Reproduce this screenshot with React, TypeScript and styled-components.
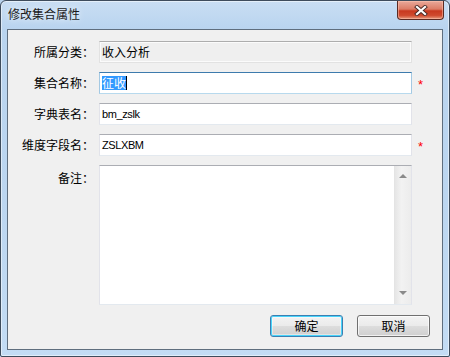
import React from 'react';
import styled, { createGlobalStyle } from 'styled-components';

const GlobalStyle = createGlobalStyle`
  html, body {
    margin: 0;
    padding: 0;
    background: #b8d2ec;
  }
  body {
    font-family: 'Noto Sans CJK SC', sans-serif;
    font-size: 12px;
    color: #000;
  }
`;

const fields = [
  { label: '所属分类：', value: '收入分析', kind: 'disabled' as const },
  { label: '集合名称：', value: '征收', kind: 'focused' as const, required: true },
  { label: '字典表名：', value: 'bm_zslk', kind: 'normal' as const },
  { label: '维度字段名：', value: 'ZSLXBM', kind: 'normal' as const, required: true },
];

const App = () => {
  return (
    <>
      <GlobalStyle />
      <Window>
        <TitleBar>
          <Title>修改集合属性</Title>
          <CloseButton>
            <svg width="14" height="11" viewBox="0 0 14 11">
              <path
                d="M3 2 L11 9 M11 2 L3 9"
                stroke="#4a2a26"
                strokeWidth="4"
                strokeLinecap="square"
              />
              <path
                d="M3 2 L11 9 M11 2 L3 9"
                stroke="#fff"
                strokeWidth="2.2"
                strokeLinecap="square"
              />
            </svg>
          </CloseButton>
        </TitleBar>
        <Client>
          <Form>
            {fields.map((f) => (
              <React.Fragment key={f.label}>
                <Label>{f.label}</Label>
                <TextBox $kind={f.kind}>
                  {f.kind === 'focused' ? (
                    <>
                      <Selected>{f.value}</Selected>
                      <Caret />
                    </>
                  ) : (
                    <Value $latin={/^[\x00-\x7f]+$/.test(f.value)}>{f.value}</Value>
                  )}
                </TextBox>
                <Mark>{f.required ? '*' : ''}</Mark>
              </React.Fragment>
            ))}
            <Label $top>备注：</Label>
            <Memo>
              <MemoBody />
              <ScrollBar>
                <Arrow $up />
                <Arrow />
              </ScrollBar>
            </Memo>
            <Mark />
          </Form>
          <Buttons>
            <Button $default>确定</Button>
            <Button>取消</Button>
          </Buttons>
        </Client>
      </Window>
    </>
  );
};

export default App;

const Window = styled.div`
  width: 450px;
  height: 357px;
  box-sizing: border-box;
  border: 1px solid #3e4c5c;
  border-radius: 6px 6px 2px 2px;
  padding: 0 6px 6px 6px;
  display: flex;
  flex-direction: column;
  background: linear-gradient(
    to bottom,
    #c9def3 0px,
    #b9d4ef 28px,
    #bcd6f0 200px,
    #c3dcf4 100%
  );
  box-shadow: inset 0 0 0 1px rgba(255, 255, 255, 0.5);
`;

const TitleBar = styled.div`
  height: 28px;
  display: flex;
  justify-content: space-between;
  align-items: flex-start;
`;

const Title = styled.div`
  padding: 5px 0 0 1px;
  font-size: 12px;
  line-height: 16px;
  color: #1b1b1b;
  text-shadow: 0 0 6px rgba(255, 255, 255, 0.9);
`;

const CloseButton = styled.div`
  width: 47px;
  height: 19px;
  margin-right: -1px;
  box-sizing: border-box;
  border: 1px solid #5a2a22;
  border-top: none;
  border-radius: 0 0 4px 4px;
  background: linear-gradient(
    to bottom,
    #e9a99a 0%,
    #dc7c66 45%,
    #c8391f 55%,
    #cf4a2e 80%,
    #e79a7d 100%
  );
  box-shadow: inset 0 0 0 1px rgba(255, 200, 180, 0.5);
  display: flex;
  align-items: center;
  justify-content: center;
`;

const Client = styled.div`
  flex: 1;
  border: 1px solid #5f6e7e;
  background: #f0f0f0;
  padding: 11px 12px 11px 0;
  display: flex;
  flex-direction: column;
`;

const Form = styled.div`
  display: grid;
  grid-template-columns: 86px 313px 1fr;
  grid-template-rows: repeat(4, 22px) 140px;
  column-gap: 5px;
  row-gap: 9px;
`;

const Label = styled.div<{ $top?: boolean }>`
  text-align: right;
  align-self: ${(p) => (p.$top ? 'start' : 'center')};
  padding-top: ${(p) => (p.$top ? '5px' : '0')};
  font-size: 12px;
  line-height: 16px;
  white-space: nowrap;
  color: #000;
`;

const borders = {
  disabled: '#adadad #e2e2e2 #e2e2e2 #e2e2e2',
  normal: '#abadb3 #e2e3ea #e3e9ef #e2e3ea',
  focused: '#3d7bad #a4c9e3 #b7d9ed #a4c9e3',
};

const TextBox = styled.div<{ $kind: 'disabled' | 'normal' | 'focused' }>`
  box-sizing: border-box;
  height: 22px;
  border: 1px solid;
  border-color: ${(p) => borders[p.$kind]};
  background: ${(p) => (p.$kind === 'disabled' ? '#efefef' : '#fff')};
  box-shadow: ${(p) =>
    p.$kind === 'disabled' ? 'inset 0 0 0 1px #fbfbfb' : 'none'};
  display: flex;
  align-items: center;
  padding-left: 2px;
`;

const Value = styled.span<{ $latin?: boolean }>`
  font-family: ${(p) =>
    p.$latin
      ? "'Liberation Sans', Arial, sans-serif"
      : "'Noto Sans CJK SC', sans-serif"};
  font-size: ${(p) => (p.$latin ? '11px' : '12px')};
  letter-spacing: ${(p) => (p.$latin ? '-0.4px' : '0')};
  line-height: 16px;
  color: #000;
`;

const Selected = styled.span`
  background: #3399ff;
  color: #fff;
  font-size: 12px;
  line-height: 14px;
  height: 14px;
  padding: 0 0 0 0;
  display: inline-block;
`;

const Caret = styled.span`
  display: inline-block;
  width: 1px;
  height: 14px;
  background: #000;
`;

const Mark = styled.div`
  align-self: center;
  color: #ff0000;
  font-family: 'Liberation Sans', Arial, sans-serif;
  font-size: 13px;
  line-height: 10px;
  padding-top: 3px;
  padding-left: 1px;
`;

const Memo = styled.div`
  box-sizing: border-box;
  border: 1px solid;
  border-color: #abadb3 #e2e3ea #e3e9ef #e2e3ea;
  background: #fff;
  display: flex;
`;

const MemoBody = styled.div`
  flex: 1;
`;

const ScrollBar = styled.div`
  width: 16px;
  border-left: 1px solid #e4e4e4;
  background: linear-gradient(to right, #e6e6e6, #f2f2f2 40%, #ececec);
  display: flex;
  flex-direction: column;
  justify-content: space-between;
  align-items: center;
  padding: 8px 0 9px;
`;

const Arrow = styled.div<{ $up?: boolean }>`
  width: 0;
  height: 0;
  border-left: 4px solid transparent;
  border-right: 4px solid transparent;
  ${(p) =>
    p.$up
      ? 'border-bottom: 4px solid #8a8a8a;'
      : 'border-top: 4px solid #8a8a8a;'}
`;

const Buttons = styled.div`
  display: flex;
  justify-content: flex-end;
  gap: 14px;
  margin-top: 10px;
`;

const Button = styled.div<{ $default?: boolean }>`
  box-sizing: border-box;
  width: 73px;
  height: 22px;
  border: 1px solid ${(p) => (p.$default ? '#3c7fb1' : '#707070')};
  border-radius: 3px;
  background: linear-gradient(
    to bottom,
    #f3f3f3 0%,
    #ebebeb 48%,
    #dddddd 52%,
    #cfcfcf 100%
  );
  box-shadow: ${(p) =>
    p.$default
      ? 'inset 0 0 0 1px #48d4fb, inset 0 0 0 2px rgba(255,255,255,0.4)'
      : 'inset 0 0 0 1px rgba(255,255,255,0.7)'};
  display: flex;
  align-items: center;
  justify-content: center;
  font-size: 12px;
  line-height: 16px;
  color: #000;
`;
